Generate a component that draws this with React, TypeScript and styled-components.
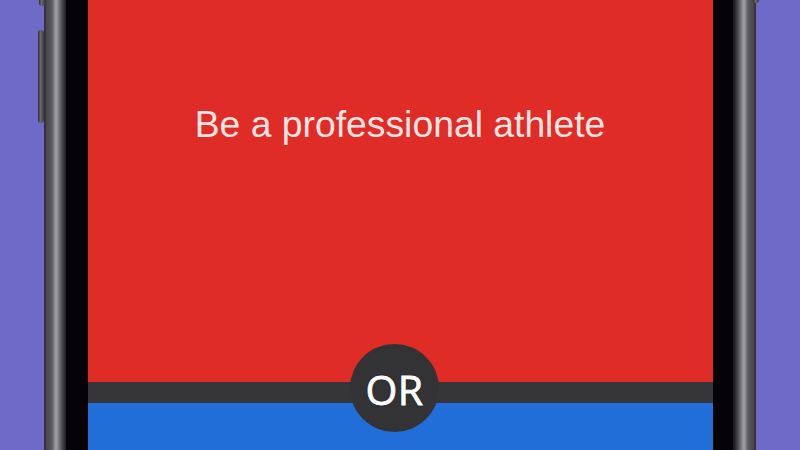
import React from "react";
import styled, { createGlobalStyle } from "styled-components";

const Global = createGlobalStyle`
  html, body { margin: 0; padding: 0; }
  body { width: 800px; height: 450px; overflow: hidden; background: #6f69c8; }
`;

const Stage = styled.div`
  width: 800px;
  height: 450px;
  display: flex;
  padding-left: 44px;
  box-sizing: border-box;
  background: #6f69c8;
  overflow: hidden;
`;

const Phone = styled.div`
  position: relative;
  display: flex;
  height: 100%;
`;

const Rail = styled.div<{ $side: "left" | "right" }>`
  width: ${(p) => (p.$side === "left" ? 22 : 23)}px;
  height: 100%;
  background: linear-gradient(
    ${(p) => (p.$side === "left" ? "to right" : "to left")},
    #2b2a2e 0px,
    #4a494d 3px,
    #5e5d61 8px,
    #a3a2a6 12px,
    #77767a 15px,
    #4b4a4e 18px,
    #1c1b1f 22px
  );
`;

const Bezel = styled.div`
  background: #050308;
  padding: 0 20px 0 22px;
  height: 100%;
`;

const Screen = styled.div`
  position: relative;
  width: 625px;
  height: 100%;
  display: flex;
  flex-direction: column;
`;

const Choice = styled.div<{ $color: string }>`
  background: ${(p) => p.$color};
  display: flex;
  justify-content: center;
`;

const Top = styled(Choice)`
  height: 382px;
`;

const Bottom = styled(Choice)`
  flex: 1;
`;

const Divider = styled.div`
  height: 21px;
  background: #363537;
`;

const Prompt = styled.div`
  margin-top: 106px;
  margin-left: -1px;
  font-family: "Liberation Sans", Arial, sans-serif;
  font-size: 37.3px;
  line-height: 37.5px;
  color: #f8e4e3;
`;

const OrBadge = styled.div`
  position: absolute;
  left: 262px;
  top: 344px;
  width: 89px;
  height: 88px;
  border-radius: 50%;
  background: #333234;
  display: flex;
  align-items: center;
  justify-content: center;
  font-family: "Open Sans", sans-serif;
  font-weight: 400;
  font-size: 41px;
  letter-spacing: 0.5px;
  line-height: 1;
  color: #ffffff;
  -webkit-text-stroke: 0.8px #ffffff;
  text-shadow: 0 0 2px #1a1a1a;
  padding-top: 2px;
  box-sizing: border-box;
`;

const SideButton = styled.div<{ $top: number; $height: number; $x: number }>`
  position: absolute;
  left: ${(p) => p.$x}px;
  top: ${(p) => p.$top}px;
  width: 6px;
  height: ${(p) => p.$height}px;
  border-radius: 3px;
  background: linear-gradient(to right, #2a292d, #6a696d 40%, #3a393d);
`;

export default function App() {
  return (
    <>
      <Global />
      <Stage>
        <Phone>
          <SideButton $x={-5} $top={-4} $height={10} />
          <SideButton $x={-6} $top={30} $height={93} />
          <SideButton $x={709} $top={-6} $height={9} />
          <Rail $side="left" />
          <Bezel>
            <Screen>
              <Top $color="#e02c27">
                <Prompt>Be a professional athlete</Prompt>
              </Top>
              <Divider />
              <Bottom $color="#216ed9" />
              <OrBadge>OR</OrBadge>
            </Screen>
          </Bezel>
          <Rail $side="right" />
        </Phone>
      </Stage>
    </>
  );
}
